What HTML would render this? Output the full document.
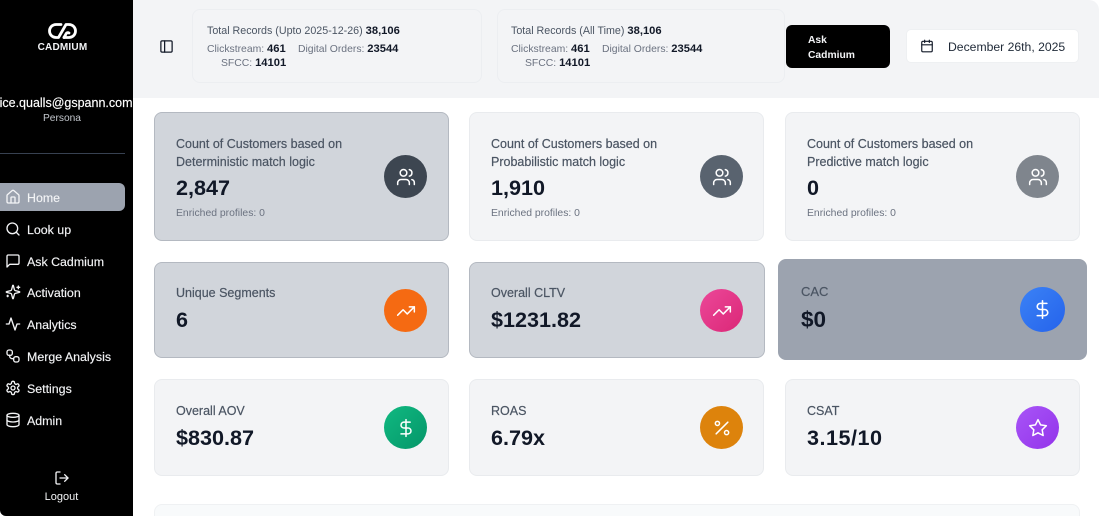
<!DOCTYPE html>
<html><head><meta charset="utf-8">
<style>
*{box-sizing:border-box;margin:0;padding:0}
html,body{width:1099px;height:516px;overflow:hidden;background:#fff;font-family:"Liberation Sans",sans-serif}
#page{position:relative;width:1099px;height:516px;overflow:hidden;background:#fff}
.a{position:absolute;white-space:nowrap}
#side{position:absolute;left:0;top:0;width:133px;height:516px;background:#000;border-bottom-left-radius:6px;overflow:hidden}
#head{position:absolute;left:133px;top:0;width:966px;height:98px;background:#f3f4f6;border-top-right-radius:10px}
.nav{position:absolute;left:27px;font-size:12.4px;color:#f3f4f6;line-height:18px;white-space:nowrap;-webkit-text-stroke:.15px #f3f4f6}
.ni{position:absolute;left:5px;width:16px;height:16px;fill:none;stroke:#f3f4f6;stroke-width:2;stroke-linecap:round;stroke-linejoin:round}
.box{position:absolute;top:9px;height:74px;background:#f3f4f6;border:1px solid #eceef1;border-radius:8px}
.t{font-size:10.4px;color:#4b5563;white-space:nowrap;position:absolute;line-height:14px}
.t b{color:#111827;font-size:11.2px}
.g{color:#6b7280}
.card{position:absolute;border-radius:8px;background:#f3f4f6;border:1px solid #e9ebee}
.sel{background:#d1d5db;border:1px solid #b4b9c1}
.lab{position:absolute;left:21px;font-size:12.5px;color:#4b5563;line-height:18px;white-space:nowrap;-webkit-text-stroke:.2px #4b5563}
.val{position:absolute;left:21px;font-size:21.6px;font-weight:700;color:#111827;line-height:28px;white-space:nowrap}
.en{position:absolute;left:21px;font-size:10.4px;color:#6b7280;line-height:14px;white-space:nowrap}
.ic{position:absolute;width:43px;height:43px;border-radius:50%;display:block}
.ic svg{position:absolute;left:11.500px;top:11.500px;width:20px;height:20px;fill:none;stroke:#fff;stroke-width:1.800;stroke-linecap:round;stroke-linejoin:round}
</style></head><body>
<div id="page">

<div id="side">
  <svg class="a" style="left:48px;top:23px;width:29px;height:16px" viewBox="0 0 29 16" fill="none" stroke="#fff" stroke-width="2.800" stroke-linecap="round" stroke-linejoin="round"><path d="M13 1.500H8a6.500 6.500 0 0 0 0 13h2.500L18 1.500h3a6.500 6.500 0 0 1 0 13h-5"/><path d="M16 14.500l2-3.500a2 2 0 0 1 3-1"/></svg>
  <div class="a" style="left:0;width:125px;top:41.500px;text-align:center;font-size:10px;font-weight:700;color:#f3f4f6;letter-spacing:.2px;line-height:12px">CADMIUM</div>
  <div class="a" style="right:.5px;top:95px;font-size:12.500px;color:#fff;line-height:17px;-webkit-text-stroke:.15px #fff">alice.qualls@gspann.com</div>
  <div class="a" style="left:0;width:124px;top:112px;text-align:center;font-size:10.200px;color:#c3c7cd;line-height:14px">Persona</div>
  <div class="a" style="left:0;top:153px;width:125px;height:1px;background:#374151"></div>
  <div class="a" style="left:0;top:183px;width:125px;height:28px;background:#9ca3af;border-radius:0 6px 6px 0"></div>

  <svg class="ni" style="top:189px" viewBox="0 0 24 24"><path d="M15 21v-8a1 1 0 0 0-1-1h-4a1 1 0 0 0-1 1v8"/><path d="M3 10a2 2 0 0 1 .7-1.500l7-6a2 2 0 0 1 2.600 0l7 6a2 2 0 0 1 .7 1.500v9a2 2 0 0 1-2 2H5a2 2 0 0 1-2-2z"/></svg>
  <div class="nav" style="top:189px">Home</div>
  <svg class="ni" style="top:221px" viewBox="0 0 24 24"><circle cx="11" cy="11" r="8"/><path d="m21 21-4.300-4.300"/></svg>
  <div class="nav" style="top:221px">Look up</div>
  <svg class="ni" style="top:253px" viewBox="0 0 24 24"><path d="M21 15a2 2 0 0 1-2 2H7l-4 4V5a2 2 0 0 1 2-2h14a2 2 0 0 1 2 2z"/></svg>
  <div class="nav" style="top:253px">Ask Cadmium</div>
  <svg class="ni" style="top:284px" viewBox="0 0 24 24"><path d="M9.900 15.500A2 2 0 0 0 8.500 14.100l-6.100-1.600a.5.5 0 0 1 0-1l6.100-1.600A2 2 0 0 0 9.900 8.500l1.600-6.100a.5.5 0 0 1 1 0l1.600 6.100a2 2 0 0 0 1.400 1.400l6.100 1.600a.5.5 0 0 1 0 1l-6.100 1.600a2 2 0 0 0-1.400 1.400l-1.600 6.100a.5.5 0 0 1-1 0z"/><path d="M20 3v4M22 5h-4M4 17v2M5 18H3"/></svg>
  <div class="nav" style="top:284px">Activation</div>
  <svg class="ni" style="top:316px" viewBox="0 0 24 24"><path d="M22 12h-4l-3 9L9 3l-3 9H2"/></svg>
  <div class="nav" style="top:316px">Analytics</div>
  <svg class="ni" style="top:348px" viewBox="0 0 24 24"><rect x="3" y="3" width="8" height="8" rx="3"/><rect x="13" y="13" width="8" height="8" rx="3"/><path d="M7 11v1a4 4 0 0 0 4 4h2"/></svg>
  <div class="nav" style="top:348px">Merge Analysis</div>
  <svg class="ni" style="top:380px" viewBox="0 0 24 24"><path d="M12.200 2h-.4a2 2 0 0 0-2 2v.2a2 2 0 0 1-1 1.700l-.4.3a2 2 0 0 1-2 0l-.2-.1a2 2 0 0 0-2.700.7l-.2.400a2 2 0 0 0 .7 2.700l.2.100a2 2 0 0 1 1 1.700v.5a2 2 0 0 1-1 1.700l-.2.100a2 2 0 0 0-.7 2.700l.2.400a2 2 0 0 0 2.700.7l.2-.1a2 2 0 0 1 2 0l.4.3a2 2 0 0 1 1 1.700v.2a2 2 0 0 0 2 2h.4a2 2 0 0 0 2-2v-.2a2 2 0 0 1 1-1.700l.4-.3a2 2 0 0 1 2 0l.2.100a2 2 0 0 0 2.700-.7l.2-.4a2 2 0 0 0-.7-2.700l-.2-.1a2 2 0 0 1-1-1.700v-.5a2 2 0 0 1 1-1.700l.2-.1a2 2 0 0 0 .7-2.700l-.2-.4a2 2 0 0 0-2.700-.7l-.2.100a2 2 0 0 1-2 0l-.4-.3a2 2 0 0 1-1-1.700V4a2 2 0 0 0-2-2z"/><circle cx="12" cy="12" r="3"/></svg>
  <div class="nav" style="top:380px">Settings</div>
  <svg class="ni" style="top:412px" viewBox="0 0 24 24"><ellipse cx="12" cy="5" rx="9" ry="3"/><path d="M3 5v14a9 3 0 0 0 18 0V5"/><path d="M3 12a9 3 0 0 0 18 0"/></svg>
  <div class="nav" style="top:412px">Admin</div>

  <svg class="ni" style="left:54px;top:470px" viewBox="0 0 24 24"><path d="M9 21H5a2 2 0 0 1-2-2V5a2 2 0 0 1 2-2h4"/><path d="m16 17 5-5-5-5"/><path d="M21 12H9"/></svg>
  <div class="a" style="left:0;width:123px;top:490px;text-align:center;font-size:11px;color:#f3f4f6;line-height:14px">Logout</div>
</div>

<div id="head"></div>
<svg class="a" style="left:159px;top:39px;width:15px;height:15px" viewBox="0 0 24 24" fill="none" stroke="#111827" stroke-width="2" stroke-linecap="round" stroke-linejoin="round"><rect x="3" y="3" width="18" height="18" rx="2"/><path d="M9 3v18"/></svg>

<div class="box" style="left:192px;width:290px"></div>
<div class="t" style="left:207px;top:24px;font-size:10.700px">Total Records (Upto 2025-12-26) <b>38,106</b></div>
<div class="t g" style="left:207px;top:42px">Clickstream: <b>461</b></div>
<div class="t g" style="left:298px;top:42px">Digital Orders: <b>23544</b></div>
<div class="t g" style="left:221px;top:56px">SFCC: <b>14101</b></div>

<div class="box" style="left:497px;width:288px"></div>
<div class="t" style="left:511px;top:24px;font-size:10.700px">Total Records (All Time) <b>38,106</b></div>
<div class="t g" style="left:511px;top:42px">Clickstream: <b>461</b></div>
<div class="t g" style="left:602px;top:42px">Digital Orders: <b>23544</b></div>
<div class="t g" style="left:525px;top:56px">SFCC: <b>14101</b></div>

<div class="a" style="left:786px;top:25px;width:104px;height:43px;background:#000;border-radius:6px"></div>
<div class="a" style="left:808px;top:32.500px;font-size:10.300px;font-weight:700;color:#f3f4f6;line-height:15px">Ask<br>Cadmium</div>

<div class="a" style="left:906px;top:29px;width:173px;height:34px;background:#fff;border:1px solid #eef0f2;border-radius:5px"></div>
<svg class="a" style="left:920px;top:39px;width:14px;height:14px" viewBox="0 0 24 24" fill="none" stroke="#111827" stroke-width="2" stroke-linecap="round" stroke-linejoin="round"><path d="M8 2v4M16 2v4"/><rect x="3" y="4" width="18" height="18" rx="2"/><path d="M3 10h18"/></svg>
<div class="a" style="left:948px;top:38px;font-size:12.200px;color:#1f2937;line-height:18px">December 26th, 2025</div>

<div class="card sel" style="left:154px;top:112px;width:294.500px;height:129px">
  <div class="lab" style="top:22px">Count of Customers based on<br>Deterministic match logic</div>
  <div class="val" style="top:61px">2,847</div>
  <div class="en" style="top:92px;top:94px">Enriched profiles: 0</div>
  <div class="ic" style="left:229px;top:42px;background:#3d4651"><svg viewBox="0 0 24 24"><path d="M16 21v-2a4 4 0 0 0-4-4H6a4 4 0 0 0-4 4v2"/><path d="M16 3.100a4 4 0 0 1 0 7.800"/><path d="M22 21v-2a4 4 0 0 0-3-3.900"/><circle cx="9" cy="7" r="4"/></svg></div>
</div>
<div class="card" style="left:469px;top:112px;width:295px;height:129px">
  <div class="lab" style="top:22px">Count of Customers based on<br>Probabilistic match logic</div>
  <div class="val" style="top:61px">1,910</div>
  <div class="en" style="top:94px">Enriched profiles: 0</div>
  <div class="ic" style="left:230px;top:42px;background:#59636f"><svg viewBox="0 0 24 24"><path d="M16 21v-2a4 4 0 0 0-4-4H6a4 4 0 0 0-4 4v2"/><path d="M16 3.100a4 4 0 0 1 0 7.800"/><path d="M22 21v-2a4 4 0 0 0-3-3.900"/><circle cx="9" cy="7" r="4"/></svg></div>
</div>
<div class="card" style="left:785px;top:112px;width:295px;height:129px">
  <div class="lab" style="top:22px">Count of Customers based on<br>Predictive match logic</div>
  <div class="val" style="top:61px">0</div>
  <div class="en" style="top:94px">Enriched profiles: 0</div>
  <div class="ic" style="left:230px;top:42px;background:#7f858d"><svg viewBox="0 0 24 24"><path d="M16 21v-2a4 4 0 0 0-4-4H6a4 4 0 0 0-4 4v2"/><path d="M16 3.100a4 4 0 0 1 0 7.800"/><path d="M22 21v-2a4 4 0 0 0-3-3.900"/><circle cx="9" cy="7" r="4"/></svg></div>
</div>

<div class="card sel" style="left:154px;top:262px;width:294.500px;height:96px">
  <div class="lab" style="top:21px">Unique Segments</div>
  <div class="val" style="top:43px">6</div>
  <div class="ic" style="left:229px;top:26px;background:#f56a12"><svg viewBox="0 0 24 24"><path d="M22 7 13.500 15.500l-5-5L2 17"/><path d="M16 7h6v6"/></svg></div>
</div>
<div class="card sel" style="left:469px;top:262px;width:296px;height:96px">
  <div class="lab" style="top:21px">Overall CLTV</div>
  <div class="val" style="top:43px">$1231.82</div>
  <div class="ic" style="left:230px;top:26px;background:linear-gradient(135deg,#ec4899,#db2777)"><svg viewBox="0 0 24 24"><path d="M22 7 13.500 15.500l-5-5L2 17"/><path d="M16 7h6v6"/></svg></div>
</div>
<div class="card" style="left:778px;top:259px;width:309px;height:101px;background:#9ca3af;border:1px solid #9ca3af">
  <div class="lab" style="left:22px;top:23px;font-size:13px">CAC</div>
  <div class="val" style="left:22px;top:46px;font-size:22.500px">$0</div>
  <div class="ic" style="left:241px;top:27px;width:45px;height:45px;background:linear-gradient(135deg,#3b82f6,#2563eb)"><svg style="left:12px;top:12px;width:21px;height:21px" viewBox="0 0 24 24"><path d="M12 2v20"/><path d="M17 5H9.500a3.500 3.500 0 0 0 0 7h5a3.500 3.500 0 0 1 0 7H6"/></svg></div>
</div>

<div class="card" style="left:154px;top:379px;width:294.500px;height:97px">
  <div class="lab" style="top:22px">Overall AOV</div>
  <div class="val" style="top:44px">$830.87</div>
  <div class="ic" style="left:229px;top:26px;background:linear-gradient(135deg,#10b981,#059669)"><svg viewBox="0 0 24 24"><path d="M12 2v20"/><path d="M17 5H9.500a3.500 3.500 0 0 0 0 7h5a3.500 3.500 0 0 1 0 7H6"/></svg></div>
</div>
<div class="card" style="left:469px;top:379px;width:295px;height:97px">
  <div class="lab" style="top:22px">ROAS</div>
  <div class="val" style="top:44px">6.79x</div>
  <div class="ic" style="left:230px;top:26px;background:#dd830c"><svg viewBox="0 0 24 24"><path d="M19 5 5 19"/><circle cx="6.500" cy="6.500" r="2.500"/><circle cx="17.500" cy="17.500" r="2.500"/></svg></div>
</div>
<div class="card" style="left:785px;top:379px;width:295px;height:97px">
  <div class="lab" style="top:22px">CSAT</div>
  <div class="val" style="top:44px;letter-spacing:.5px">3.15/10</div>
  <div class="ic" style="left:230px;top:26px;background:linear-gradient(135deg,#a855f7,#9333ea)"><svg viewBox="0 0 24 24"><path d="M12 2l3.090 6.260L22 9.270l-5 4.870 1.180 6.880L12 17.770l-6.180 3.250L7 14.140 2 9.270l6.910-1.010z"/></svg></div>
</div>

<div class="a" style="left:154px;top:504px;width:926px;height:30px;background:#f8fafb;border:1px solid #eff1f3;border-radius:8px"></div>

</div>
</body></html>
